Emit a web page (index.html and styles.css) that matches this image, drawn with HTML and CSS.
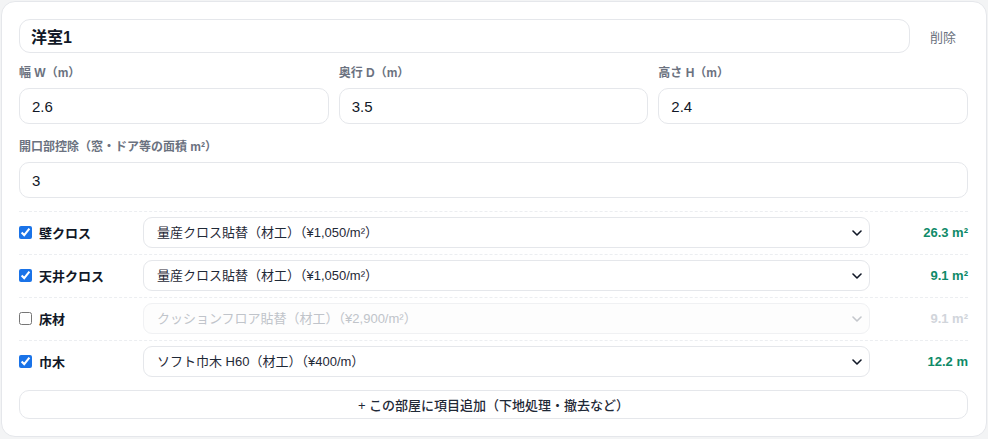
FILE: index.html
```html
<!DOCTYPE html>
<html lang="ja">
<head>
<meta charset="utf-8">
<title>洋室1</title>
<link rel="stylesheet" href="styles.css">
</head>
<body>
<div class="card">
  <div class="header">
    <input class="name-input" type="text" value="洋室1">
    <button class="delete-btn" type="button">削除</button>
  </div>
  <div class="dims">
    <div class="field">
      <label class="field-label">幅 W（m）</label>
      <input class="text-input" type="text" value="2.6">
    </div>
    <div class="field">
      <label class="field-label">奥行 D（m）</label>
      <input class="text-input" type="text" value="3.5">
    </div>
    <div class="field">
      <label class="field-label">高さ H（m）</label>
      <input class="text-input" type="text" value="2.4">
    </div>
  </div>
  <div class="field opening">
    <label class="field-label">開口部控除（窓・ドア等の面積 m²）</label>
    <input class="text-input" type="text" value="3">
  </div>
  <div class="items">
    <div class="item">
      <label class="item-label"><input type="checkbox" checked><span>壁クロス</span></label>
      <div class="select-wrap">
        <select class="item-select"><option>量産クロス貼替（材工）（¥1,050/m²）</option></select>
        <svg class="chev" width="10" height="6" viewBox="0 0 10 6"><path d="M1 1l4 4 4-4" fill="none" stroke="#111827" stroke-width="1.6" stroke-linecap="round" stroke-linejoin="round"/></svg>
      </div>
      <div class="qty">26.3 m²</div>
    </div>
    <div class="item">
      <label class="item-label"><input type="checkbox" checked><span>天井クロス</span></label>
      <div class="select-wrap">
        <select class="item-select"><option>量産クロス貼替（材工）（¥1,050/m²）</option></select>
        <svg class="chev" width="10" height="6" viewBox="0 0 10 6"><path d="M1 1l4 4 4-4" fill="none" stroke="#111827" stroke-width="1.6" stroke-linecap="round" stroke-linejoin="round"/></svg>
      </div>
      <div class="qty">9.1 m²</div>
    </div>
    <div class="item off">
      <label class="item-label"><input type="checkbox"><span>床材</span></label>
      <div class="select-wrap">
        <select class="item-select" disabled><option>クッションフロア貼替（材工）（¥2,900/m²）</option></select>
        <svg class="chev" width="10" height="6" viewBox="0 0 10 6"><path d="M1 1l4 4 4-4" fill="none" stroke="#c4c7cc" stroke-width="1.6" stroke-linecap="round" stroke-linejoin="round"/></svg>
      </div>
      <div class="qty">9.1 m²</div>
    </div>
    <div class="item">
      <label class="item-label"><input type="checkbox" checked><span>巾木</span></label>
      <div class="select-wrap">
        <select class="item-select"><option>ソフト巾木 H60（材工）（¥400/m）</option></select>
        <svg class="chev" width="10" height="6" viewBox="0 0 10 6"><path d="M1 1l4 4 4-4" fill="none" stroke="#111827" stroke-width="1.6" stroke-linecap="round" stroke-linejoin="round"/></svg>
      </div>
      <div class="qty">12.2 m</div>
    </div>
  </div>
  <button class="add-btn" type="button">+ この部屋に項目追加（下地処理・撤去など）</button>
</div>
</body>
</html>
```

FILE: styles.css
```css
* { box-sizing: border-box; }
html, body { margin: 0; padding: 0; }
body {
  background: #f3f4f5;
  font-family: "Liberation Sans", "Noto Sans CJK JP", sans-serif;
  color: #111827;
  padding: 1px;
  height: 439px;
  overflow: hidden;
}
.card {
  background: #fff;
  border: 1px solid #e5e7eb;
  border-radius: 14px;
  padding: 17px 18px 17px 17px;
  width: 986px;
}
.header {
  display: flex;
  align-items: center;
  gap: 8px;
  margin-bottom: 11px;
}
.name-input {
  flex: 1;
  height: 34px;
  border: 1px solid #e5e7eb;
  border-radius: 11px;
  padding: 0 11px;
  font-family: inherit;
  font-size: 16px;
  font-weight: 700;
  color: #111827;
  background: #fff;
  outline: none;
}
.delete-btn {
  border: none;
  background: transparent;
  font-family: inherit;
  font-size: 13px;
  color: #6b7280;
  width: 50px;
  height: 34px;
  padding: 0;
  cursor: pointer;
}
.dims {
  display: grid;
  grid-template-columns: 1fr 1fr 1fr;
  gap: 10px;
  margin-bottom: 14px;
}
.field { display: flex; flex-direction: column; }
.field-label {
  font-size: 12px;
  font-weight: 600;
  color: #6b7280;
  line-height: 18px;
  margin-bottom: 6px;
}
.text-input {
  height: 36px;
  border: 1px solid #e5e7eb;
  border-radius: 10px;
  padding: 0 12px;
  font-family: inherit;
  font-size: 15px;
  color: #111827;
  background: #fff;
  outline: none;
  width: 100%;
}
.opening { margin-bottom: 13px; }
.items { display: flex; flex-direction: column; }
.item {
  display: grid;
  grid-template-columns: 116px 1fr 90px;
  gap: 8px;
  align-items: center;
  border-top: 1px dashed #eceef1;
  padding: 5px 0 6px;
}
.item-label {
  display: flex;
  align-items: center;
  gap: 7px;
  font-size: 13px;
  font-weight: 700;
  color: #111827;
}
.item-label input {
  margin: 0;
  width: 13px;
  height: 13px;
  accent-color: #1a73e8;
}
.select-wrap { position: relative; }
.item-select {
  -webkit-appearance: none;
  appearance: none;
  width: 100%;
  height: 31px;
  border: 1px solid #e5e7eb;
  border-radius: 9px;
  background: #fff;
  padding: 0 30px 0 13px;
  font-family: inherit;
  font-size: 13px;
  color: #1f2937;
  outline: none;
}
.item-select:disabled {
  color: #c0c4ca;
  border-color: #f0f1f3;
  background: #fdfdfd;
  opacity: 1;
}
.chev {
  position: absolute;
  right: 8px;
  top: 13px;
  pointer-events: none;
}
.qty {
  text-align: right;
  font-size: 13px;
  font-weight: 700;
  color: #0f8a68;
}
.off .qty { color: #d1d5db; }
.add-btn {
  display: block;
  width: 100%;
  height: 29px;
  margin-top: 7px;
  border: 1px solid #e5e7eb;
  border-radius: 10px;
  background: #fff;
  font-family: inherit;
  font-size: 13px;
  font-weight: 500;
  color: #1f2937;
  cursor: pointer;
}
```
